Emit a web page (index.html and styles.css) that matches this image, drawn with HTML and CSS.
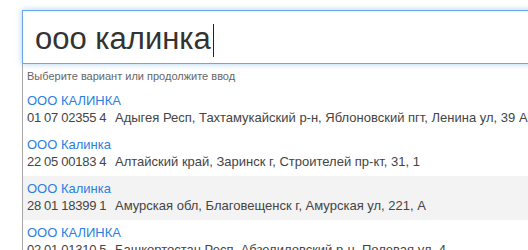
FILE: index.html
```html
<!DOCTYPE html>
<html lang="ru">
<head>
<meta charset="utf-8">
<link rel="stylesheet" href="styles.css">
</head>
<body>
<div class="wrap">
  <div class="field"><span class="value">ооо калинка</span><span class="caret"></span></div>
  <div class="menu">
    <div class="hint">Выберите вариант или продолжите ввод</div>
    <div class="item">
      <div class="name">ООО КАЛИНКА</div>
      <div class="sub"><span class="inn"><span class="g">01</span><span class="g">07</span><span class="g">02355</span><span>4</span></span><span class="addr">Адыгея Респ, Тахтамукайский р-н, Яблоновский пгт, Ленина ул, 39 А</span></div>
    </div>
    <div class="item">
      <div class="name">ООО Калинка</div>
      <div class="sub"><span class="inn"><span class="g">22</span><span class="g">05</span><span class="g">00183</span><span>4</span></span><span class="addr">Алтайский край, Заринск г, Строителей пр-кт, 31, 1</span></div>
    </div>
    <div class="item selected">
      <div class="name">ООО Калинка</div>
      <div class="sub"><span class="inn"><span class="g">28</span><span class="g">01</span><span class="g">18399</span><span>1</span></span><span class="addr">Амурская обл, Благовещенск г, Амурская ул, 221, А</span></div>
    </div>
    <div class="item">
      <div class="name">ООО КАЛИНКА</div>
      <div class="sub"><span class="inn"><span class="g">02</span><span class="g">01</span><span class="g">01310</span><span>5</span></span><span class="addr">Башкортостан Респ, Абзелиловский р-н, Полевая ул, 4</span></div>
    </div>
  </div>
</div>
</body>
</html>
```

FILE: styles.css
```css
html, body {
  margin: 0;
  padding: 0;
  background: #ffffff;
  overflow: hidden;
}
body {
  font-family: "Liberation Sans", Arial, sans-serif;
  width: 528px;
  height: 250px;
}
.wrap {
  padding: 10px 0 0 22px;
  width: 560px;
}
.field {
  height: 52px;
  border: 1px solid #6aa8e8;
  box-shadow: 0 0 6px rgba(102, 170, 233, 0.55), inset 0 1px 1px rgba(0, 0, 0, 0.06);
  padding-left: 12px;
  display: flex;
  align-items: center;
  font-size: 31px;
  color: #333333;
  white-space: nowrap;
  position: relative;
  z-index: 1;
  background: #ffffff;
}
.value {
  line-height: 52px;
  padding-top: 4px;
}
.caret {
  display: inline-block;
  width: 1px;
  height: 33px;
  background: #222222;
  margin-left: 2px;
  margin-top: 6px;
}
.menu {
  border: 1px solid #a8a8a8;
  border-top: none;
  background: #ffffff;
  color: #444444;
  font-size: 13px;
}
.hint {
  font-size: 11px;
  color: #666666;
  line-height: 17px;
  padding: 4px 4px 3px;
}
.item {
  padding: 4px 4px 5px;
}
.item.selected {
  background: #f3f3f3;
}
.name {
  color: #2b80e2;
  line-height: 17px;
}
.sub {
  line-height: 18px;
  white-space: nowrap;
  display: flex;
}
.inn {
  width: 88px;
  flex: none;
  letter-spacing: -0.2px;
}
.g {
  margin-right: 3px;
}
.addr {
  flex: none;
}
```
